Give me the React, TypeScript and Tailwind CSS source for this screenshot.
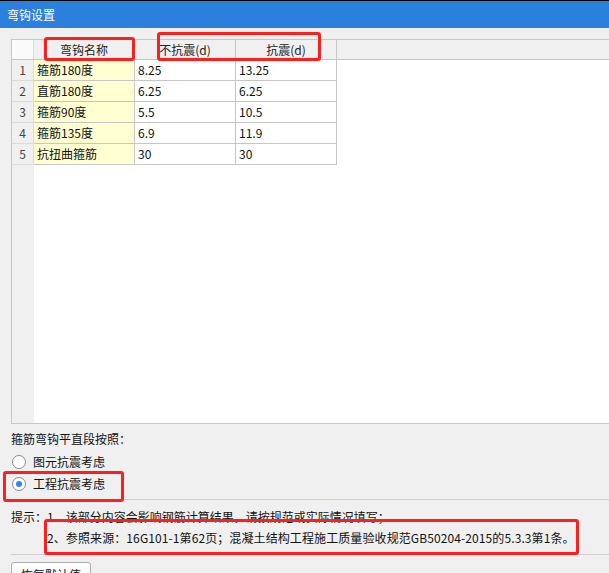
const rows = [
  { no: 1, name: "箍筋180度", a: "8.25", b: "13.25" },
  { no: 2, name: "直筋180度", a: "6.25", b: "6.25" },
  { no: 3, name: "箍筋90度", a: "5.5", b: "10.5" },
  { no: 4, name: "箍筋135度", a: "6.9", b: "11.9" },
  { no: 5, name: "抗扭曲箍筋", a: "30", b: "30" },
];

function Radio({ checked, label }: { checked?: boolean; label: string }) {
  return (
    <div className="flex h-[22px] items-center pl-[12px]">
      <span className="flex h-[14px] w-[14px] items-center justify-center rounded-full border border-[#8a8a8a] bg-white">
        {checked && <span className="h-[6px] w-[6px] rounded-full bg-[#2f86e6]" />}
      </span>
      <span className="ml-[7px] leading-[16px]">{label}</span>
    </div>
  );
}

export default function App() {
  return (
    <div
      className="relative h-[573px] w-[609px] overflow-hidden bg-[#f0f0f0] text-[12px] text-[#111]"
      style={{ fontFamily: '"Noto Sans CJK SC", "Noto Sans", sans-serif' }}
    >
      <div className="h-px bg-black" />
      <div className="flex h-[27px] items-center bg-[#2b7fdd] pl-[7px] leading-[16px] text-white">弯钩设置</div>

      {/* grid */}
      <div className="ml-[11px] mt-[11px] flex h-[385px] flex-col border-y border-l border-[#c6c6c6] bg-white">
        <div className="flex h-[20px] border-b border-[#c6c6c6] bg-[#f0f0f0]">
          <div className="w-[22px] border-r border-[#dcdcdc] bg-[#fafafa]" />
          {["弯钩名称", "不抗震(d)", "抗震(d)"].map((h) => (
            <div key={h} className="flex w-[101px] items-center justify-center border-r border-[#c6c6c6] leading-[16px] text-[#222]">
              {h}
            </div>
          ))}
          <div className="flex-1" />
        </div>
        {rows.map((r) => (
          <div key={r.no} className="flex h-[21px]">
            <div className="flex w-[22px] items-center justify-center border-b border-r border-[#dcdcdc] bg-[#f0f0f0] text-[#444]">{r.no}</div>
            <div className="flex w-[101px] items-center border-b border-r border-[#c6c6c6] bg-[#ffffd2] pl-[3px] leading-[16px]">{r.name}</div>
            <div className="flex w-[101px] items-center border-b border-r border-[#c6c6c6] pl-[3px] leading-[16px]">{r.a}</div>
            <div className="flex w-[101px] items-center border-b border-r border-[#c6c6c6] pl-[3px] leading-[16px]">{r.b}</div>
          </div>
        ))}
        <div className="flex flex-1">
          <div className="w-[22px] bg-[#f0f0f0]" />
        </div>
      </div>

      <div className="ml-[11px] mt-[7px] leading-[16px]">箍筋弯钩平直段按照：</div>
      <div className="mt-[4px]">
        <Radio label="图元抗震考虑" />
        <Radio checked label="工程抗震考虑" />
      </div>
      <div className="ml-[11px] mt-[4px] h-px bg-[#d0d0d0]" />

      <div className="ml-[11px] mt-[9px] leading-[16px]">提示：1、该部分内容会影响钢筋计算结果，请按规范或实际情况填写；</div>
      <div className="ml-[47px] mt-[5px] whitespace-nowrap leading-[16px] tracking-[0.1px]">
        2、参照来源：16G101-1第62页；混凝土结构工程施工质量验收规范GB50204-2015的5.3.3第1条。
      </div>
      <div className="ml-[11px] mt-[8px] h-px bg-[#d0d0d0]" />
      <button className="ml-[11px] mt-[7px] flex h-[26px] w-[80px] items-center justify-center rounded-[3px] border border-[#adadad] bg-gradient-to-b from-white to-[#f2f2f2] leading-[16px]">
        恢复默认值
      </button>

      {/* red annotation boxes */}
      <div className="absolute left-[44px] top-[37px] h-[24px] w-[91px] rounded-[3px] border-[3px] border-[#fe1f1f]" />
      <div className="absolute left-[157px] top-[32px] h-[29px] w-[164px] rounded-[3px] border-[3px] border-[#fe1f1f]" />
      <div className="absolute left-[3px] top-[471px] h-[31px] w-[121px] rounded-[3px] border-[3px] border-[#fe1f1f]" />
      <div className="absolute left-[44px] top-[519px] h-[36px] w-[535px] rounded-[3px] border-[3px] border-[#fe1f1f]" />
    </div>
  );
}
